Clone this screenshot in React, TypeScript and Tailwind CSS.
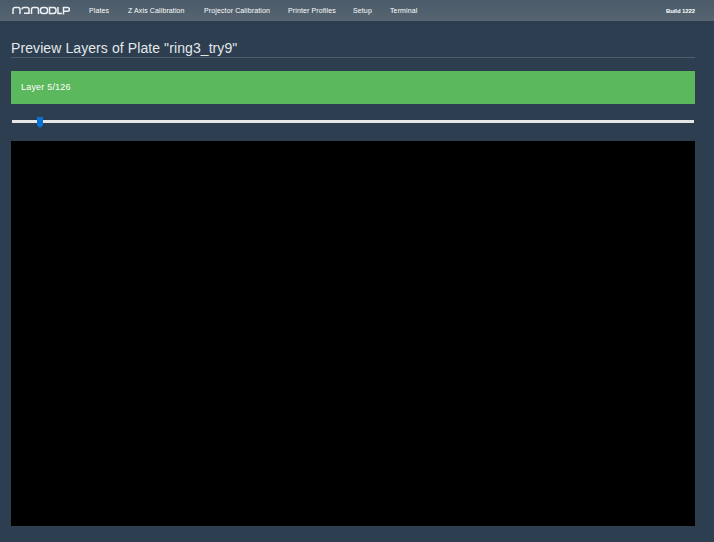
const NAV_LINKS = [
  { label: "Plates", width: "w-[39px]" },
  { label: "Z Axis Calibration", width: "w-[76px]" },
  { label: "Projector Calibration", width: "w-[84px]" },
  { label: "Printer Profiles", width: "w-[65px]" },
  { label: "Setup", width: "w-[37px]" },
  { label: "Terminal", width: "w-[40px]" },
];

const Logo = () => (
  <svg width="58" height="9" viewBox="0 0 58 9" fill="none" stroke="#eef1f3" strokeWidth="1.5">
    {/* n a n o d l p drawn as a wordmark */}
    <path d="M1 8V3.500a2 2 0 0 1 2-2h3a2 2 0 0 1 2 2V8" />
    <path d="M10 3.500a2 2 0 0 1 2-2h3a2 2 0 0 1 2 2V8M17 7.300h-5" />
    <path d="M19.500 8V3.500a2 2 0 0 1 2-2h3a2 2 0 0 1 2 2V8" />
    <rect x="28.500" y="1.500" width="7" height="6" rx="2.500" />
    <circle cx="32" cy="4.500" r="0.800" fill="#4a9cc0" stroke="none" />
    <path d="M37.500 1.500h4a2.500 2.500 0 0 1 2.500 2.500v1a2.500 2.500 0 0 1-2.500 2.500h-4z" />
    <path d="M46 1V7.500h4" />
    <path d="M51.500 8.500V1.500h4a1.800 1.800 0 0 1 0 3.800h-4" />
  </svg>
);

export default function App() {
  return (
    <div className="min-h-[542px] bg-[#2c3e50] font-['Liberation_Sans',Arial,sans-serif] text-white">
      <nav className="flex h-[21px] items-center bg-gradient-to-b from-[#4a5a69] to-[#566570] pl-3 pr-[19px]">
        <Logo />
        <ul className="ml-[19px] flex items-center">
          {NAV_LINKS.map((link) => (
            <li key={link.label} className={`${link.width} text-[7px] leading-none font-normal tracking-[0.12px] text-white whitespace-nowrap`}>
              {link.label}
            </li>
          ))}
        </ul>
        <span className="ml-auto text-[6px] leading-none font-bold tracking-[-0.1px] text-white">Build 1222</span>
      </nav>

      <main className="pl-[11px] pr-[19px]">
        <h1 className="mt-[20px] h-[17px] border-b border-[#4d5d6c] text-[14px] leading-[14px] font-normal tracking-[0.09px] text-[#e3e7ea]">
          Preview Layers of Plate "ring3_try9"
        </h1>

        <div className="mt-[13px] flex h-[33px] items-center bg-[#5cb85c] px-[10px] text-[9px] tracking-[0.2px] text-white">
          Layer 5/126
        </div>

        <div className="relative mx-px mt-[16px] h-[3px] bg-[#e6e6e6]">
          <div className="absolute top-[-3px] left-[25px] h-[11px] w-[6px] bg-[#0a74d6] [clip-path:polygon(0_0,100%_0,100%_75%,50%_100%,0_75%)]" />
        </div>

        <div className="mt-[18px] h-[385px] bg-black" />
      </main>
    </div>
  );
}
